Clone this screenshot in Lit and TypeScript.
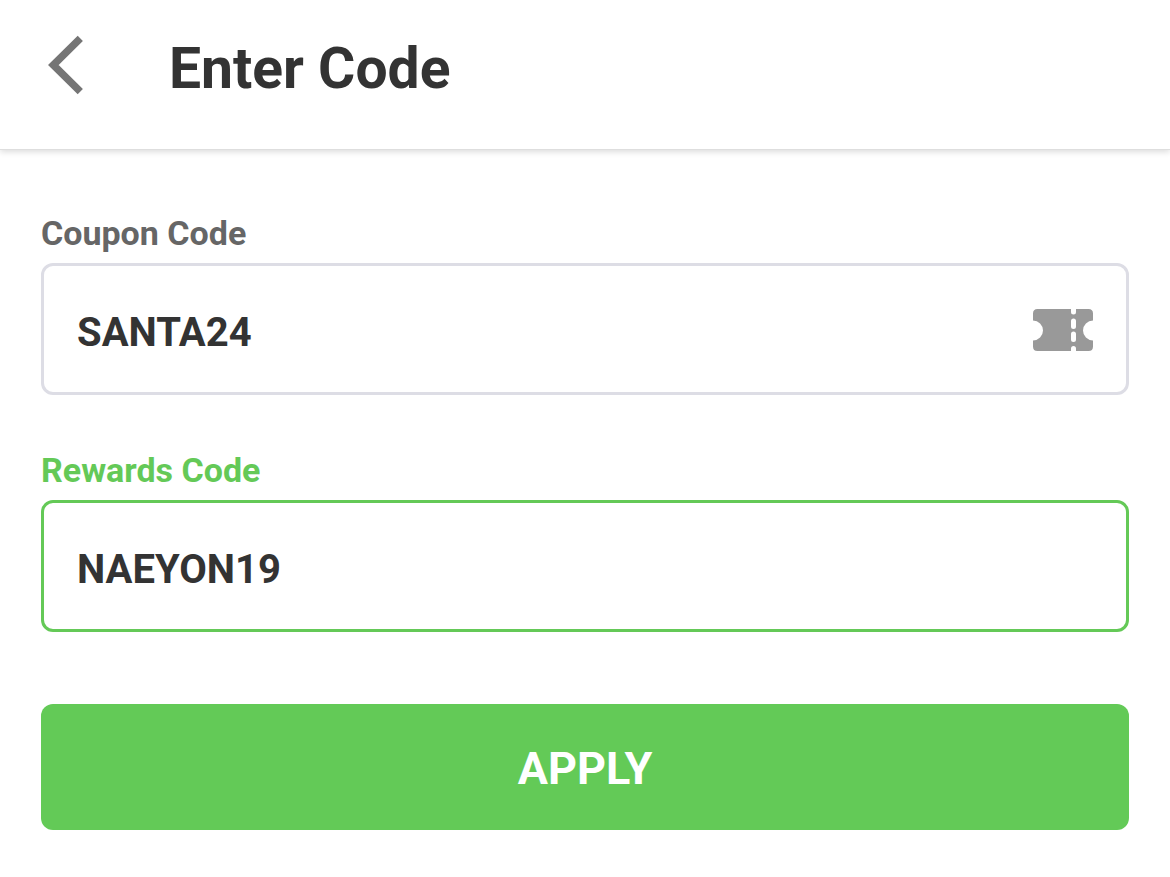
import { LitElement, html, css } from "lit";
import { customElement } from "lit/decorators.js";

@customElement("app-root")
export class AppRoot extends LitElement {
  static styles = css`
    :host { display: block; min-height: 100vh; background: #fff; color: #333; font-family: Roboto, "Noto Sans", sans-serif; }
    * { box-sizing: border-box; }
    header { display: flex; align-items: center; gap: 73px; padding: 32px 40px 44px; border-bottom: 1px solid #dedede; box-shadow: 0 2px 6px rgba(0, 0, 0, 0.14); }
    .back { display: flex; width: 56px; height: 73px; padding: 0; border: 0; background: none; align-items: flex-start; justify-content: flex-start; }
    h1 { margin: 0; font-size: 57px; line-height: 73px; font-weight: 700; }
    form { display: flex; flex-direction: column; padding: 60px 41px 48px; }
    .field { display: flex; flex-direction: column; margin-bottom: 52px; }
    label { font-size: 34px; line-height: 46px; font-weight: 700; color: #666; padding-bottom: 7px; }
    .box { display: flex; align-items: center; height: 132px; padding: 2px 33px 0; border: 3px solid #dddde5; border-radius: 12px; }
    input { flex: 1; min-width: 0; height: 100%; padding: 4px 0 0; border: 0; outline: 0; background: none; font: inherit; font-size: 40px; font-weight: 700; color: #333; }
    .active label { color: #64c957; }
    .active .box { border-color: #64c957; }
    .apply { height: 126px; margin-top: 20px; padding: 2px 0 0; border: 0; border-radius: 12px; background: #63ca57; color: #fff; font: inherit; font-size: 45px; font-weight: 700; }
  `;

  render() {
    return html`
      <header>
        <button class="back" aria-label="Back">
          <svg width="56" height="64" viewBox="0 0 56 64"><path d="M40.3 6.4 L13.3 33 L40.3 59.6" fill="none" stroke="#757575" stroke-width="7.4"/></svg>
        </button>
        <h1>Enter Code</h1>
      </header>
      <form @submit=${(e: Event) => e.preventDefault()}>
        <div class="field">
          <label for="coupon">Coupon Code</label>
          <div class="box">
            <input id="coupon" type="text" value="SANTA24" />
            <svg width="60" height="42" viewBox="0 0 60 42">
              <path d="M4.500 0H55.500Q60 0 60 4.500V11.500A10 10 0 0 0 60 31.500V37.500Q60 42 55.500 42H4.500Q0 42 0 37.500V31.500A10 10 0 0 0 0 11.500V4.500Q0 0 4.500 0Z" fill="#999"/>
              <path d="M40.5 -3V3M40.5 12V17.5M40.5 25V30.5M40.5 39.5V45" stroke="#fff" stroke-width="5" stroke-linecap="round"/>
            </svg>
          </div>
        </div>
        <div class="field active">
          <label for="rewards">Rewards Code</label>
          <div class="box"><input id="rewards" type="text" value="NAEYON19" /></div>
        </div>
        <button class="apply" type="submit">APPLY</button>
      </form>
    `;
  }
}
